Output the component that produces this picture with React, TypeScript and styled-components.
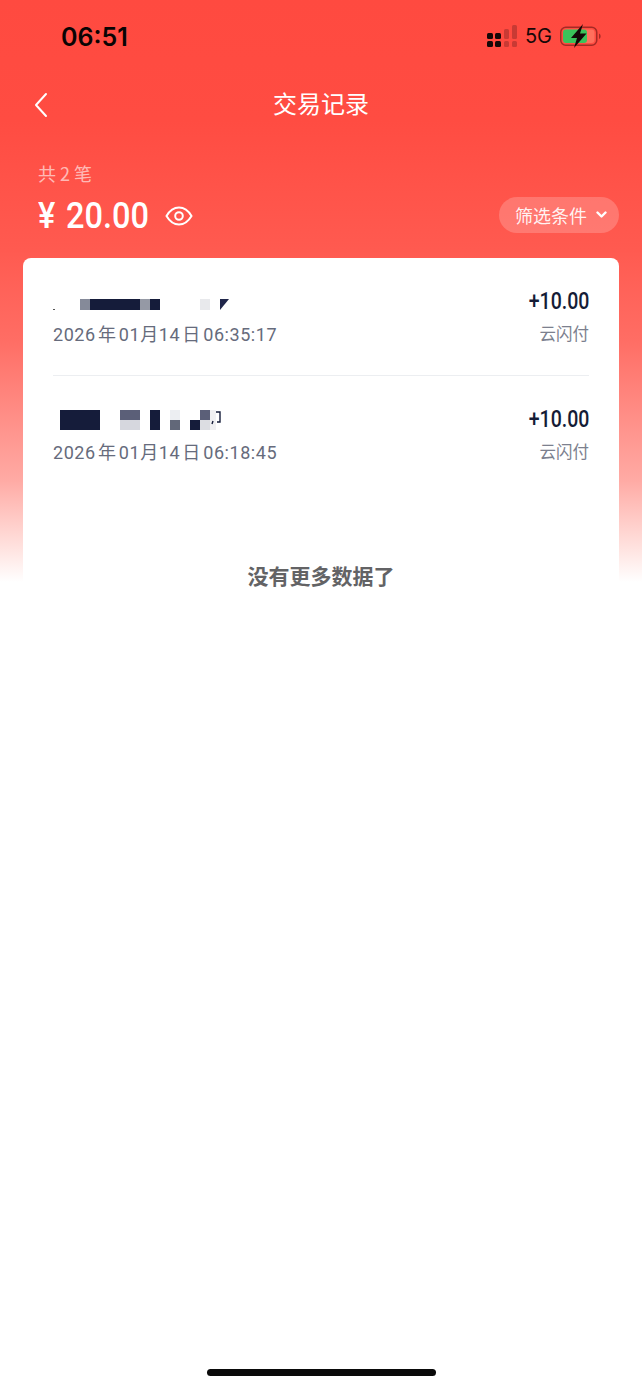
import React from "react";
import styled, { createGlobalStyle } from "styled-components";

const CJK = `"Noto Sans CJK SC", "Noto Sans", sans-serif`;
const LATIN = `Roboto, "Noto Sans CJK SC", sans-serif`;

const Global = createGlobalStyle`
  html, body { margin: 0; padding: 0; background: #fff; }
  * { box-sizing: border-box; }
`;

const Page = styled.div`
  width: 642px;
  height: 1389px;
  overflow: hidden;
  display: flex;
  flex-direction: column;
  font-family: ${CJK};
  background: linear-gradient(180deg, #ff4a40 0px, #ff4c42 120px, #ff5a50 250px, #ff6d64 340px, #ffaaa4 480px, #ffe4e1 550px, #ffffff 582px);
`;

const StatusBar = styled.div`
  height: 72px;
  display: flex;
  align-items: center;
  justify-content: space-between;
  padding: 1px 41px 0 61px;
`;

const Clock = styled.span`
  font-family: Inter, "Liberation Sans", sans-serif;
  font-weight: 600;
  font-size: 25px;
  color: #0a0404;
`;

const StatusIcons = styled.div`
  display: flex;
  align-items: center;
  gap: 8px;
  margin-top: -1px;
`;

const NetLabel = styled.span`
  font-family: Inter, "Liberation Sans", sans-serif;
  font-size: 20px;
  font-weight: 400;
  color: #170808;
`;

const NavBar = styled.div`
  height: 66px;
  position: relative;
  display: flex;
  align-items: center;
  justify-content: center;
`;

const BackIcon = styled.svg`
  position: absolute;
  left: 33px;
  top: 20px;
`;

const Title = styled.h1`
  margin: 0 0 4px;
  font-size: 24px;
  line-height: 34px;
  font-weight: 400;
  color: #fff;
`;

const Summary = styled.div`
  height: 120px;
  padding: 22px 23px 0 38px;
  display: flex;
  flex-direction: column;
`;

const CountLabel = styled.div`
  font-size: 18px;
  line-height: 26px;
  letter-spacing: 1px;
  word-spacing: -2px;
  color: rgba(255, 255, 255, 0.62);
`;

const SummaryRow = styled.div`
  margin-top: 5px;
  display: flex;
  align-items: center;
  justify-content: space-between;
`;

const AmountGroup = styled.div`
  padding-top: 3px;
  display: flex;
  align-items: center;
`;

const Amount = styled.span`
  display: inline-block;
  width: 127px;
  white-space: nowrap;
  font-family: ${LATIN};
  font-size: 37px;
  line-height: 44px;
  font-weight: 500;
  word-spacing: 3px;
  color: #fff;
  transform: scaleX(0.88);
  transform-origin: left center;
`;

const FilterButton = styled.button`
  width: 120px;
  height: 36px;
  margin-top: 1px;
  border: 0;
  border-radius: 18px;
  padding: 0 0 0 16px;
  display: flex;
  align-items: center;
  gap: 9px;
  background: rgba(255, 255, 255, 0.2);
  color: rgba(255, 255, 255, 0.92);
  font-family: ${CJK};
  font-size: 18px;
  line-height: 36px;
`;

const Card = styled.div`
  margin: 0 23px;
  padding: 0 30px;
  background: #fff;
  border-radius: 8px 8px 0 0;
  height: 800px;
`;

const Row = styled.div<{ $last?: boolean }>`
  height: ${(p) => (p.$last ? 117 : 118)}px;
  padding-top: 31px;
  display: flex;
  justify-content: space-between;
  border-bottom: ${(p) => (p.$last ? "0" : "1px solid #eceef1")};
`;

const LeftCol = styled.div`
  display: flex;
  flex-direction: column;
  gap: 10px;
`;

const RightCol = styled.div`
  padding-top: 1px;
  display: flex;
  flex-direction: column;
  align-items: flex-end;
  gap: 7px;
`;

const Mosaic = styled.svg`
  display: block;
  width: 180px;
  height: 24px;
`;

const DateText = styled.div`
  font-family: ${LATIN};
  font-size: 18px;
  line-height: 24px;
  letter-spacing: 0.55px;
  word-spacing: -2.7px;
  color: #666b7c;
  white-space: nowrap;
`;

const Money = styled.div`
  font-family: ${LATIN};
  font-size: 23px;
  line-height: 24px;
  font-weight: 500;
  color: #151c36;
  transform: scaleX(0.85);
  transform-origin: right center;
`;

const Channel = styled.div`
  font-size: 16.5px;
  line-height: 24px;
  color: #7c808e;
`;

const Footer = styled.div`
  padding-top: 68px;
  text-align: center;
  font-size: 21px;
  line-height: 28px;
  font-weight: 700;
  color: #636365;
`;

const Spacer = styled.div`
  flex: 1;
`;

const HomeBar = styled.div`
  width: 229px;
  height: 7px;
  margin: 0 auto 13px;
  border-radius: 4px;
  background: #0a0a0a;
`;

const Signal = () => (
  <svg width="30" height="24" viewBox="0 0 30 24">
    <g fill="#140808">
      <rect x="0" y="9" width="6" height="6" rx="1.5" />
      <rect x="0" y="17" width="6" height="6" rx="1.5" />
      <rect x="8" y="9" width="6" height="6" rx="1.5" />
      <rect x="8" y="17" width="6" height="6" rx="1.5" />
    </g>
    <g fill="#c93a34">
      <rect x="17" y="5" width="5" height="10" rx="1.5" />
      <rect x="17" y="17" width="5" height="6" rx="1.5" />
      <rect x="25" y="1" width="5" height="14" rx="1.5" />
      <rect x="25" y="17" width="5" height="6" rx="1.5" />
    </g>
  </svg>
);

const Battery = () => (
  <svg width="41" height="24" viewBox="0 0 41 24">
    <rect x="0.75" y="3.25" width="36" height="18" rx="5" fill="none" stroke="#a52a25" strokeWidth="1.5" />
    <rect x="3" y="5.5" width="31.5" height="13.5" rx="3" fill="#ff6f5c" />
    <rect x="3" y="5.5" width="24" height="13.5" rx="3" fill="#3ac25a" />
    <path d="M39 9.5v5.5c1-.4 1.6-1.4 1.6-2.7s-.6-2.4-1.6-2.8z" fill="#a52a25" />
    <path d="M23 0 L11 14 H17 L14 24 L26.5 9.5 H20 Z" fill="#140808" />
  </svg>
);

const App: React.FC = () => (
  <Page>
    <Global />
    <StatusBar>
      <Clock>06:51</Clock>
      <StatusIcons>
        <Signal />
        <NetLabel>5G</NetLabel>
        <Battery />
      </StatusIcons>
    </StatusBar>

    <NavBar>
      <BackIcon width="16" height="26" viewBox="0 0 16 26">
        <path d="M13 2 L3 13 L13 24" fill="none" stroke="#fff" strokeWidth="2" strokeLinecap="round" strokeLinejoin="round" />
      </BackIcon>
      <Title>交易记录</Title>
    </NavBar>

    <Summary>
      <CountLabel>共 2 笔</CountLabel>
      <SummaryRow>
        <AmountGroup>
          <Amount>¥ 20.00</Amount>
          <svg width="28" height="20" viewBox="0 0 28 20" fill="none" stroke="#fff" strokeWidth="2">
            <path d="M1.5 10 C5 4 9 1.5 14 1.5 S23 4 26.5 10 C23 16 19 18.5 14 18.5 S5 16 1.5 10 Z" />
            <circle cx="14" cy="10" r="3.8" />
          </svg>
        </AmountGroup>
        <FilterButton>
          筛选条件
          <svg width="11" height="8" viewBox="0 0 11 8" fill="none" stroke="#fff" strokeWidth="2.4" strokeLinecap="round" strokeLinejoin="round">
            <path d="M1.5 1.5 L5.5 5.5 L9.5 1.5" />
          </svg>
        </FilterButton>
      </SummaryRow>
    </Summary>

    <Card>
      <Row>
        <LeftCol>
          <Mosaic viewBox="0 0 180 24">
            <rect x="0" y="20" width="2" height="1" fill="#555" />
            <rect x="27" y="10" width="10" height="11" fill="#858a99" />
            <rect x="37" y="10" width="50" height="11" fill="#151c3a" />
            <rect x="87" y="10" width="10" height="11" fill="#9599a5" />
            <rect x="97" y="10" width="10" height="11" fill="#151c3a" />
            <rect x="147" y="10" width="10" height="11" fill="#e8e9ec" />
            <path d="M167 10 H176 L167 21 Z" fill="#20264a" />
          </Mosaic>
          <DateText>2026 年 01月14 日 06:35:17</DateText>
        </LeftCol>
        <RightCol>
          <Money>+10.00</Money>
          <Channel>云闪付</Channel>
        </RightCol>
      </Row>
      <Row $last>
        <LeftCol>
          <Mosaic viewBox="0 0 180 24">
            <rect x="7" y="3" width="40" height="20" fill="#151c3a" />
            <rect x="67" y="3" width="20" height="10" fill="#5b5f78" />
            <rect x="67" y="13" width="20" height="10" fill="#d6d7de" />
            <rect x="97" y="3" width="10" height="20" fill="#151c3a" />
            <rect x="117" y="3" width="10" height="10" fill="#eceef2" />
            <rect x="117" y="13" width="10" height="10" fill="#626879" />
            <rect x="137" y="13" width="10" height="10" fill="#151c3a" />
            <rect x="147" y="3" width="10" height="10" fill="#5b5f78" />
            <rect x="147" y="13" width="10" height="10" fill="#dcdde2" />
            <rect x="157" y="3" width="6" height="20" fill="#f0f0f2" />
            <path d="M163 5 H167 V15 H164 M160 14 L159 17" fill="none" stroke="#151c3a" strokeWidth="1.4" />
          </Mosaic>
          <DateText>2026 年 01月14 日 06:18:45</DateText>
        </LeftCol>
        <RightCol>
          <Money>+10.00</Money>
          <Channel>云闪付</Channel>
        </RightCol>
      </Row>
      <Footer>没有更多数据了</Footer>
    </Card>

    <Spacer />
    <HomeBar />
  </Page>
);

export default App;
